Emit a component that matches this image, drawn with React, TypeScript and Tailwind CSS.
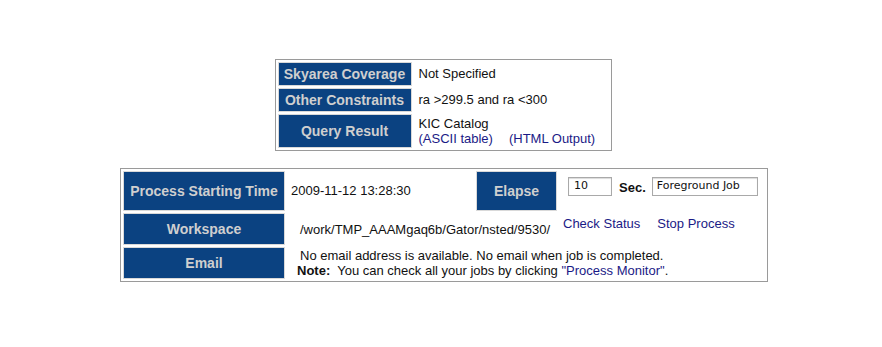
import React from 'react';

const hdr =
  'flex items-center justify-center bg-[#0b4281] border border-[#d9d9d9] text-[14px] font-bold text-[#cfcfcf] whitespace-nowrap';
const link = 'text-[#1a1a86]';

function QueryTable() {
  return (
    <div className="grid w-[337px] grid-cols-[134px_1fr] gap-[2px] border border-[#9a9a9a] p-[2px]">
      <div className={`${hdr} h-[24px]`}>Skyarea Coverage</div>
      <div className="flex items-center pl-[5px]">Not Specified</div>

      <div className={`${hdr} h-[24px]`}>Other Constraints</div>
      <div className="flex items-center pl-[5px]">ra &gt;299.5 and ra &lt;300</div>

      <div className={`${hdr} h-[34px]`}>Query Result</div>
      <div className="flex flex-col justify-center pl-[5px] leading-[15px]">
        <span>KIC Catalog</span>
        <span>
          <span className={link}>(ASCII table)</span>
          <span className={`${link} ml-[16px]`}>(HTML Output)</span>
        </span>
      </div>
    </div>
  );
}

function ProcessTable() {
  return (
    <div className="grid w-[648px] grid-cols-[162px_187px_81px_1fr] gap-[2px] border border-[#9a9a9a] p-[2px]">
      <div className={`${hdr} h-[40px]`}>Process Starting Time</div>
      <div className="flex items-center pl-[4px]">2009-11-12 13:28:30</div>
      <div className={`${hdr} h-[40px]`}>Elapse</div>
      <div className="flex items-start pl-[9px] pt-[6px]">
        <div className="flex h-[19px] w-[44px] items-center border border-[#a9a9a9] pl-[5px] font-['DejaVu_Sans',sans-serif] text-[11px] shadow-[inset_0_1px_1px_rgba(0,0,0,0.15)]">
          10
        </div>
        <span className="ml-[7px] mt-[1px] font-bold">Sec.</span>
        <div className="ml-[6px] flex h-[19px] w-[106px] items-center border border-[#a9a9a9] pl-[4px] font-['DejaVu_Sans',sans-serif] text-[11px] shadow-[inset_0_1px_1px_rgba(0,0,0,0.15)]">
          Foreground Job
        </div>
      </div>

      <div className={`${hdr} h-[32px]`}>Workspace</div>
      <div className="col-span-2 flex items-center pl-[13px] pt-[1px]">/work/TMP_AAAMgaq6b/Gator/nsted/9530/</div>
      <div className="flex items-start pl-[4px] pt-[1px]">
        <span className={link}>Check Status</span>
        <span className={`${link} ml-[17px]`}>Stop Process</span>
      </div>

      <div className={`${hdr} h-[32px]`}>Email</div>
      <div className="col-span-3 flex flex-col justify-center leading-[15px]">
        <span className="pl-[13px]">No email address is available. No email when job is completed.</span>
        <span className="pl-[10px]">
          <b>Note:</b>&nbsp; You can check all your jobs by clicking{' '}
          <span className={link}>"Process Monitor"</span>.
        </span>
      </div>
    </div>
  );
}

export default function App() {
  return (
    <div className="h-[347px] w-[882px] bg-white pt-[59px] font-['Liberation_Sans',Arial,sans-serif] text-[13px] text-[#111]">
      <div className="flex justify-center pl-[4px]">
        <QueryTable />
      </div>
      <div className="mt-[17px] flex justify-center pl-[6px]">
        <ProcessTable />
      </div>
    </div>
  );
}
